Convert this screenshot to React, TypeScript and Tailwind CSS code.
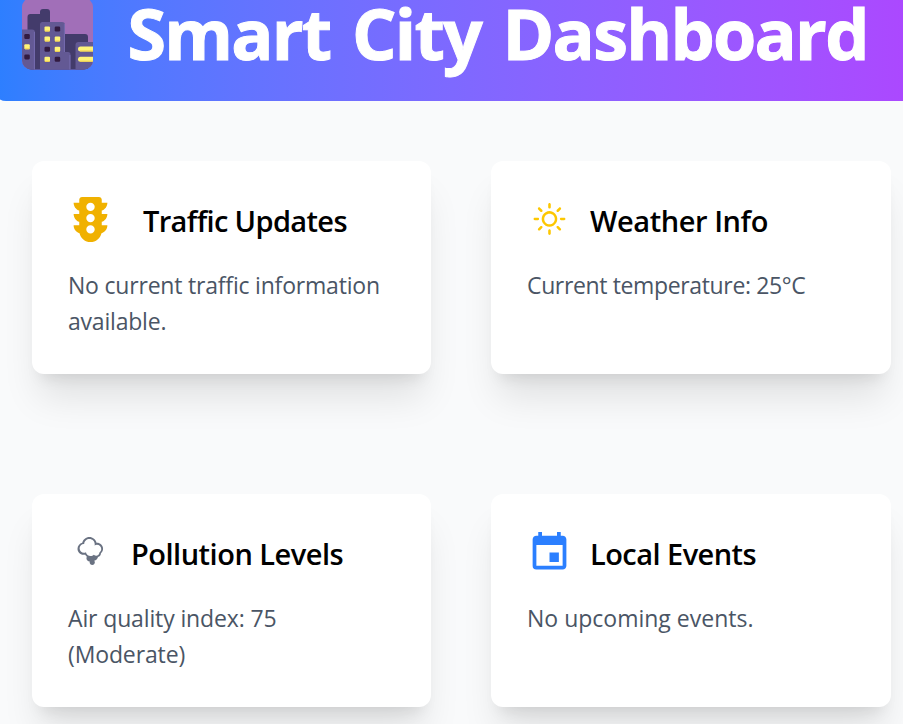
import type { ReactNode } from "react";
import { FaTrafficLight } from "react-icons/fa";
import { WiDaySunny, WiSmoke } from "react-icons/wi";
import { MdEvent } from "react-icons/md";

function CityIcon() {
  return (
    <svg viewBox="0 0 72 72" className="-mt-[2.5px] ml-7 h-[72px] w-[72px] shrink-0">
      <defs>
        <clipPath id="tile">
          <rect width="71" height="71.5" rx="9" />
        </clipPath>
      </defs>
      <g clipPath="url(#tile)">
        <rect width="72" height="72" fill="#a16fb8" />
        <path d="M5.5 72V19a3 3 0 0 1 3-3h9.500v-2a3 3 0 0 1 3-3h4a3 3 0 0 1 3 3v22h15h20a3 3 0 0 1 3 3v33z" fill="#433b6b" />
        <path d="M0 31.500h10a3 3 0 0 1 3 3V72H0z" fill="#635994" />
        <path d="M18 72V26.500a2.500 2.500 0 0 1 2.500-2.500H40a3 3 0 0 1 3 3v27h3a2.500 2.500 0 0 1 2.500 2.500V72z" fill="#635994" />
        <path d="M53.500 72V47a3 3 0 0 1 3-3H72v28z" fill="#635994" />
        <path d="M42.400 26v28M12.400 34v38M47.900 57v15" stroke="#766caf" strokeWidth="1" />
        <g fill="#fff478">
          <rect x="22.500" y="28.500" width="5.500" height="5" rx="1" />
          <rect x="22.500" y="38.500" width="5.500" height="5" rx="1" />
          <rect x="32.700" y="38.500" width="5.500" height="5" rx="1" />
          <rect x="32.700" y="48.700" width="5.500" height="5" rx="1" />
          <rect x="22.500" y="58.700" width="5.500" height="5" rx="1" />
          <rect x="2.300" y="46.200" width="5.500" height="5" rx="1" />
          <rect x="56" y="48.500" width="20" height="5" rx="2.500" />
          <rect x="56" y="58.700" width="20" height="5" rx="2.500" />
        </g>
        <path d="M23 33h4.500M23 43h4.500M33 43h4.500M33 53.300h4.500M23 63.300h4.500M3 50.800h4.500M58 53h14M58 63.200h14" stroke="#f3cf4d" strokeWidth="1" />
        <g fill="#321b41">
          <rect x="32.700" y="28.500" width="5.500" height="5" rx="1.300" />
          <rect x="22.500" y="48.700" width="5.500" height="5" rx="1.300" />
          <rect x="32.700" y="58.700" width="5.500" height="5" rx="1.300" />
          <rect x="2.300" y="36" width="5.500" height="5" rx="1.300" />
          <rect x="2.300" y="56.400" width="5.500" height="5" rx="1.300" />
        </g>
      </g>
    </svg>
  );
}

interface CardProps {
  icon: ReactNode;
  title: string;
  titleClass: string;
  textClass: string;
  children: ReactNode;
}

function Card({ icon, title, titleClass, textClass, children }: CardProps) {
  return (
    <section className="h-[213px] rounded-xl bg-white p-9 shadow-[0_30px_37.5px_-7.5px_rgba(0,0,0,0.1),0_12px_15px_-9px_rgba(0,0,0,0.1)]">
      <div className="flex h-[45px] items-center text-[45px]">
        {icon}
        <h2 className={`pt-0.5 text-[29px] leading-[42px] font-semibold whitespace-nowrap text-black ${titleClass}`}>{title}</h2>
      </div>
      <p className={`mt-[25px] text-[23px] leading-9 text-gray-600 ${textClass}`}>{children}</p>
    </section>
  );
}

export default function App() {
  return (
    <div className="h-[724px] w-[903px] overflow-hidden bg-gray-50 font-['Open_Sans','Noto_Sans',sans-serif]">
      <header className="-mr-5 -ml-1.5 flex h-[101px] items-start rounded-b-xl bg-linear-to-r from-blue-500 to-purple-500">
        <CityIcon />
        <h1 className="-mt-[3px] ml-[33.5px] text-[70px] leading-[72px] font-bold tracking-[-1.75px] [word-spacing:5px] whitespace-nowrap text-white [-webkit-text-stroke:1px_white]">
          Smart City Dashboard
        </h1>
      </header>
      <main className="grid grid-cols-[399px_400px] gap-x-[60px] gap-y-[120px] px-8 pt-[60px]">
        <Card
          icon={<FaTrafficLight className="text-yellow-500" />}
          title="Traffic Updates"
          titleClass="ml-[30px] tracking-[-0.64px]"
          textClass="tracking-[-0.2px]"
        >
          No current traffic information available.
        </Card>
        <Card
          icon={<WiDaySunny className="text-yellow-400" />}
          title="Weather Info"
          titleClass="ml-[18px] tracking-[-0.43px]"
          textClass="tracking-[-0.36px]"
        >
          Current temperature: 25°C
        </Card>
        <Card
          icon={<WiSmoke className="text-gray-500" />}
          title="Pollution Levels"
          titleClass="ml-[18px] tracking-[-0.5px]"
          textClass="tracking-[-0.13px]"
        >
          Air quality index: 75
          <br />
          (Moderate)
        </Card>
        <Card
          icon={<MdEvent className="text-blue-500" />}
          title="Local Events"
          titleClass="ml-[18px] tracking-[-0.55px]"
          textClass="tracking-[0px]"
        >
          No upcoming events.
        </Card>
      </main>
    </div>
  );
}
